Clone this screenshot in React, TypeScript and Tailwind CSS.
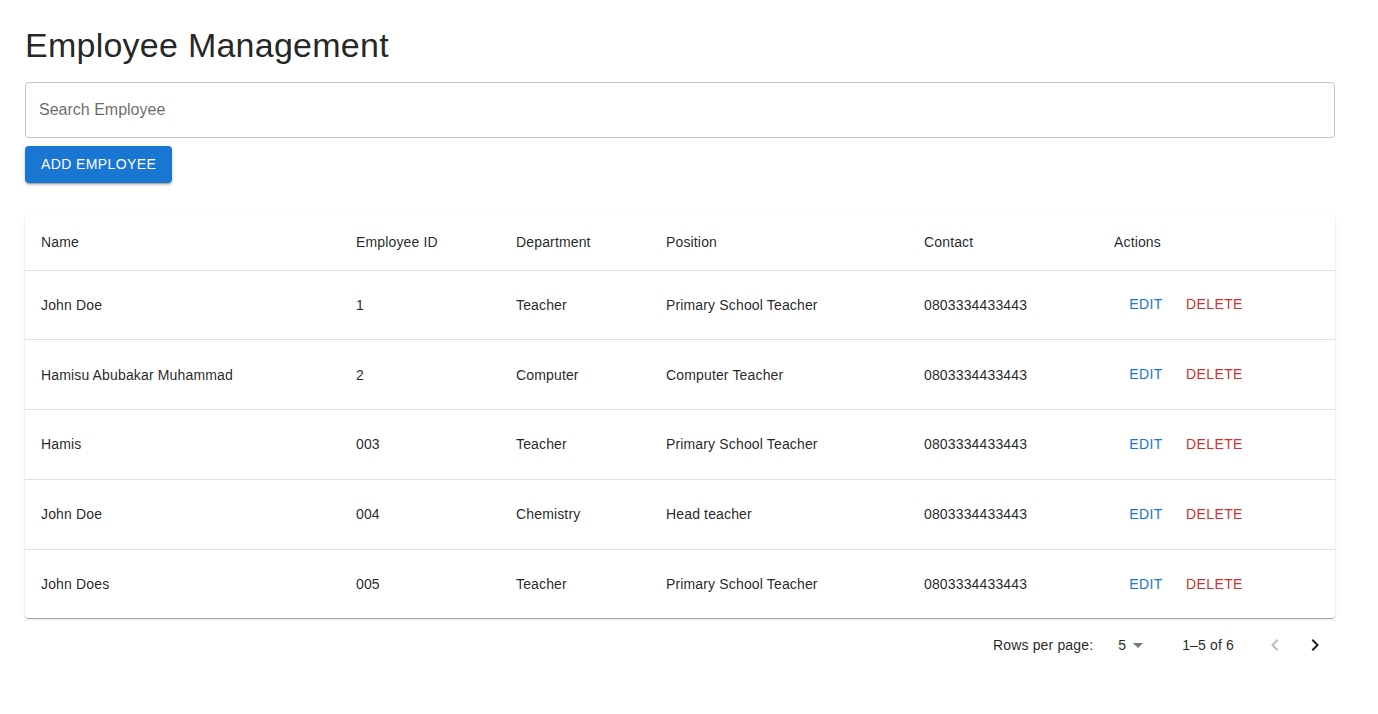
import { useState } from 'react';

// Types
interface Employee {
    name: string;
    employeeId: string;
    department: string;
    position: string;
    contact: string;
}

const employees: Employee[] = [
    { name: 'John Doe', employeeId: '1', department: 'Teacher', position: 'Primary School Teacher', contact: '0803334433443' },
    { name: 'Hamisu Abubakar Muhammad', employeeId: '2', department: 'Computer', position: 'Computer Teacher', contact: '0803334433443' },
    { name: 'Hamis', employeeId: '003', department: 'Teacher', position: 'Primary School Teacher', contact: '0803334433443' },
    { name: 'John Doe', employeeId: '004', department: 'Chemistry', position: 'Head teacher', contact: '0803334433443' },
    { name: 'John Does', employeeId: '005', department: 'Teacher', position: 'Primary School Teacher', contact: '0803334433443' },
];

export default function App() {
    const [search, setSearch] = useState('');

    return (
        <div className="min-h-screen w-full bg-white font-['Liberation_Sans',Arial,sans-serif] text-[rgba(0,0,0,0.87)]">
            <div className="w-[1360px] px-[25px] pt-[24px]">

                {/* Title */}
                <h4 className="text-[34px] leading-[42px] font-normal tracking-[0.00735em] mb-[16px]">
                    Employee Management
                </h4>

                {/* Search */}
                <input
                    value={search}
                    onChange={(e) => setSearch(e.target.value)}
                    placeholder="Search Employee"
                    className="block w-[1310px] h-[56px] px-[13px] text-[16px] border border-[#c4c4c4] rounded-[4px] outline-none placeholder:text-[rgba(0,0,0,0.6)]"
                />

                {/* Add button */}
                <button className="mt-[8px] h-[36.5px] px-[16px] rounded-[4px] bg-[#1976d2] text-white text-[14px] font-medium tracking-[0.02857em] uppercase leading-[24.5px] shadow-[0px_3px_1px_-2px_rgba(0,0,0,0.2),0px_2px_2px_0px_rgba(0,0,0,0.14),0px_1px_5px_0px_rgba(0,0,0,0.12)]">
                    Add Employee
                </button>

                {/* Table */}
                <div className="mt-[32px] w-[1310px] rounded-[4px] bg-white overflow-hidden shadow-[0px_2px_1px_-1px_rgba(0,0,0,0.2),0px_1px_1px_0px_rgba(0,0,0,0.14),0px_1px_3px_0px_rgba(0,0,0,0.12)]">
                    <table className="w-full table-fixed border-collapse text-[14px] tracking-[0.01071em]">
                        <thead>
                            <tr className="border-b border-[#e0e0e0] text-left">
                                <th className="w-[315px] p-[16px] leading-[23px] font-normal">Name</th>
                                <th className="w-[160px] p-[16px] leading-[23px] font-normal">Employee ID</th>
                                <th className="w-[150px] p-[16px] leading-[23px] font-normal">Department</th>
                                <th className="w-[258px] p-[16px] leading-[23px] font-normal">Position</th>
                                <th className="w-[190px] p-[16px] leading-[23px] font-normal">Contact</th>
                                <th className="p-[16px] leading-[23px] font-normal">Actions</th>
                            </tr>
                        </thead>
                        <tbody>
                            {employees.map((emp, i) => (
                                <tr key={i} className="border-b border-[#e0e0e0] last:border-b-0">
                                    <td className="p-[16px] leading-[20px]">{emp.name}</td>
                                    <td className="p-[16px] leading-[20px]">{emp.employeeId}</td>
                                    <td className="p-[16px] leading-[20px]">{emp.department}</td>
                                    <td className="p-[16px] leading-[20px]">{emp.position}</td>
                                    <td className="p-[16px] leading-[20px]">{emp.contact}</td>
                                    <td className="p-[16px]">
                                        <div className="flex">
                                            <button className="h-[36.8px] min-w-[64px] px-[8px] rounded-[4px] text-[#1976d2] font-medium tracking-[0.02857em] uppercase">
                                                Edit
                                            </button>
                                            <button className="h-[36.8px] min-w-[64px] px-[8px] rounded-[4px] text-[#d32f2f] font-medium tracking-[0.02857em] uppercase">
                                                Delete
                                            </button>
                                        </div>
                                    </td>
                                </tr>
                            ))}
                        </tbody>
                    </table>
                </div>

                {/* Pagination */}
                <div className="w-[1310px] h-[52px] mt-[1px] flex items-center justify-end text-[14px] tracking-[0.01071em]">
                    <span>Rows per page:</span>
                    <div className="relative ml-[10px] mr-[32px] pl-[8px] pr-[24px] min-w-[16px] text-right">
                        <span className="inline-block min-w-[15px] text-right">5</span>
                        <svg viewBox="0 0 24 24" className="absolute right-0 top-1/2 -translate-y-1/2 w-[24px] h-[24px] fill-[rgba(0,0,0,0.54)]">
                            <path d="m7 10 5 5 5-5z" />
                        </svg>
                    </div>
                    <span className="mr-[1px]">1–5 of 6</span>
                    <div className="ml-[20px] flex">
                        <button className="w-[40px] h-[40px] flex items-center justify-center rounded-full">
                            <svg viewBox="0 0 24 24" className="w-[24px] h-[24px] fill-[rgba(0,0,0,0.26)]">
                                <path d="M15.41 7.41 14 6l-6 6 6 6 1.41-1.41L10.83 12z" />
                            </svg>
                        </button>
                        <button className="w-[40px] h-[40px] flex items-center justify-center rounded-full">
                            <svg viewBox="0 0 24 24" className="w-[24px] h-[24px] fill-[rgba(0,0,0,0.87)]">
                                <path d="M10 6 8.59 7.41 13.17 12l-4.58 4.59L10 18l6-6z" />
                            </svg>
                        </button>
                    </div>
                </div>

            </div>
        </div>
    );
}
